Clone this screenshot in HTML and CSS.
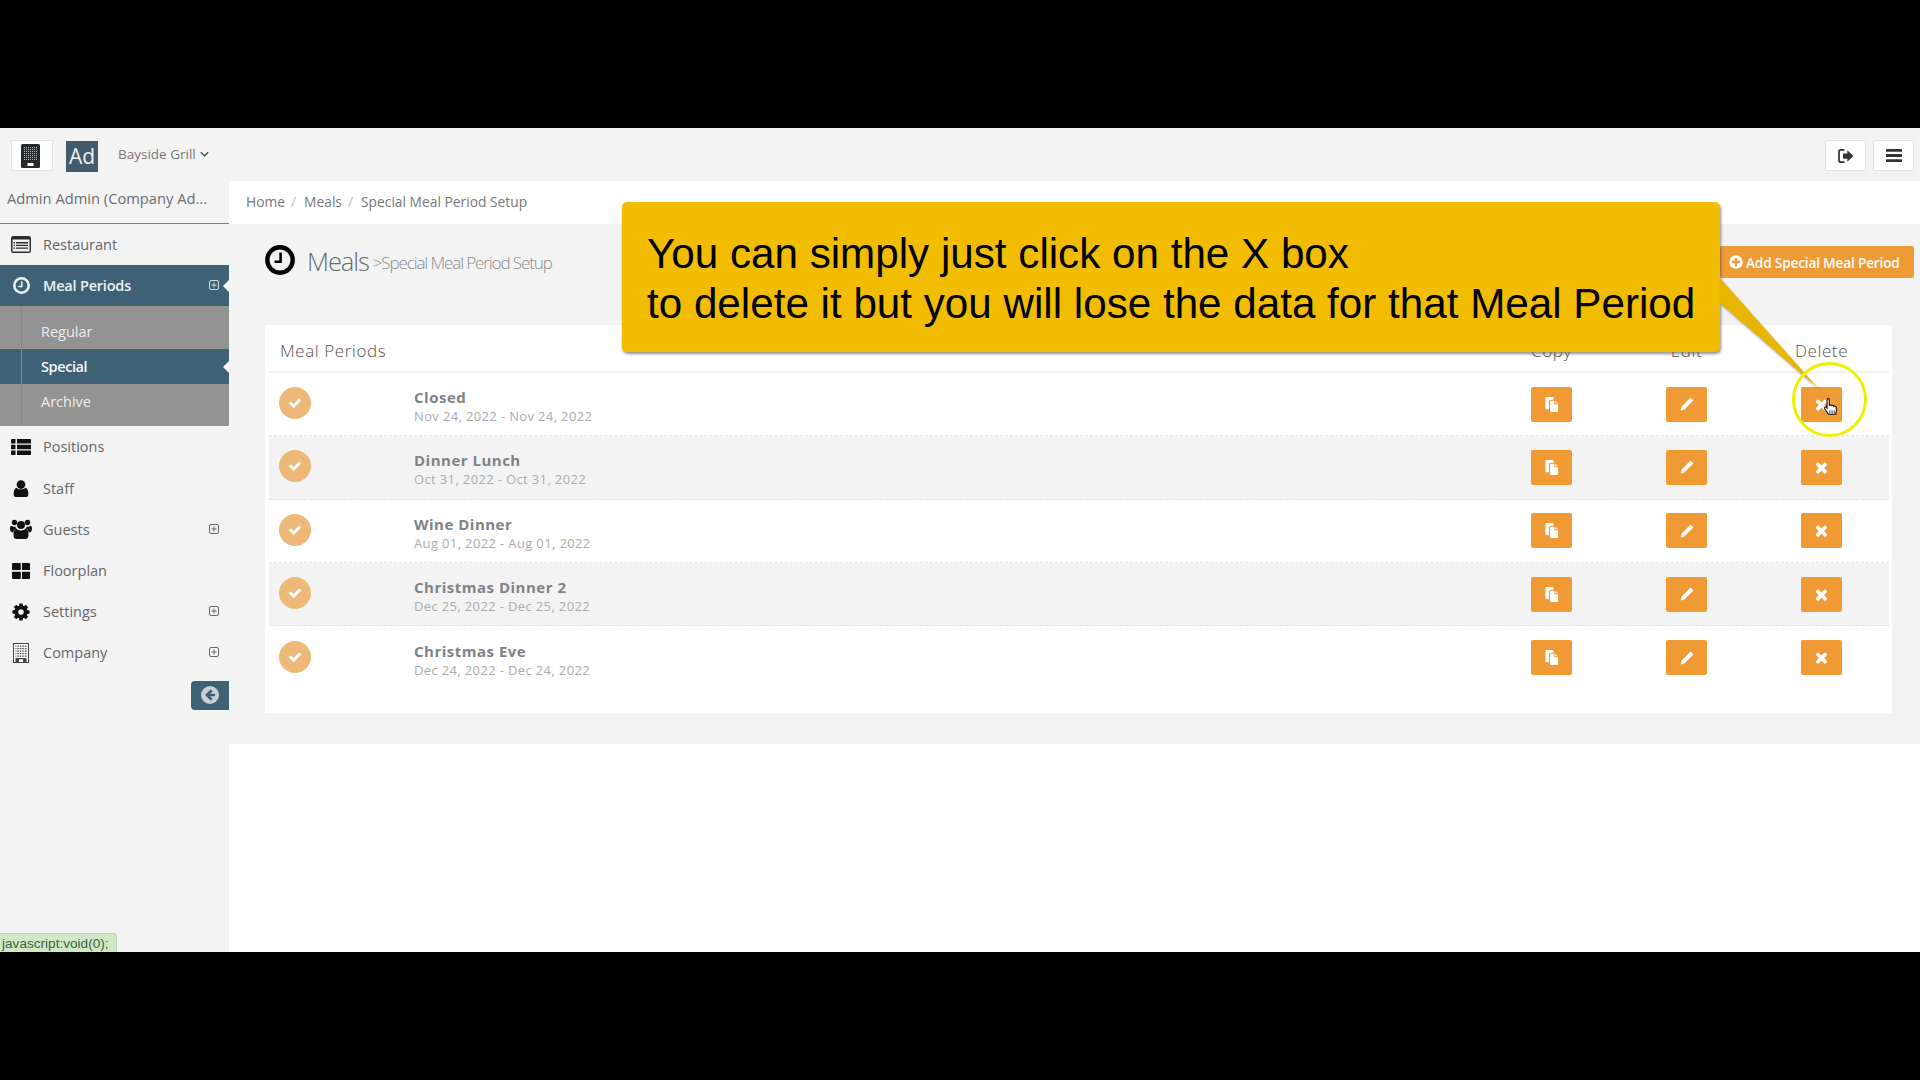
FILE: index.html
```html
<!DOCTYPE html>
<html lang="en">
<head>
<meta charset="utf-8">
<title>Special Meal Period Setup</title>
<link rel="stylesheet" href="styles.css">
</head>
<body>
<svg class="sprite" xmlns="http://www.w3.org/2000/svg">
  <symbol id="i-check" viewBox="0 0 1792 1792"><path d="M1671 566q0 40-28 68l-724 724-136 136q-28 28-68 28t-68-28l-136-136-362-362q-28-28-28-68t28-68l136-136q28-28 68-28t68 28l294 295 656-657q28-28 68-28t68 28l136 136q28 28 28 68z"/></symbol>
  <symbol id="i-times" viewBox="0 0 1792 1792"><path d="M1490 1322q0 40-28 68l-136 136q-28 28-68 28t-68-28l-294-294-294 294q-28 28-68 28t-68-28l-136-136q-28-28-28-68t28-68l294-294-294-294q-28-28-28-68t28-68l136-136q28-28 68-28t68 28l294 294 294-294q28-28 68-28t68 28l136 136q28 28 28 68t-28 68l-294 294 294 294q28 28 28 68z"/></symbol>
  <symbol id="i-cog" viewBox="0 0 1792 1792"><path d="M1152 896q0-106-75-181t-181-75-181 75-75 181 75 181 181 75 181-75 75-181zm512-109v222q0 12-8 23t-20 13l-185 28q-19 54-39 91 35 50 107 138 10 12 10 25t-9 23q-27 37-99 108t-94 71q-12 0-26-9l-138-108q-44 23-91 38-16 136-29 186-7 28-36 28h-222q-14 0-24.5-8.5t-11.5-21.5l-28-184q-49-16-90-37l-141 107q-10 9-25 9-14 0-25-11-126-114-165-168-7-10-7-23 0-12 8-23 15-21 51-66.5t54-70.5q-27-50-41-99l-183-27q-13-2-21-12.5t-8-23.5v-222q0-12 8-23t19-13l186-28q14-46 39-92-40-57-107-138-10-12-10-24 0-10 9-23 26-36 98.5-107.5t94.5-71.5q13 0 26 10l138 107q44-23 91-38 16-136 29-186 7-28 36-28h222q14 0 24.5 8.5t11.5 21.5l28 184q49 16 90 37l142-107q9-9 24-9 13 0 25 10 129 119 165 170 7 8 7 22 0 12-8 23-15 21-51 66.5t-54 70.5q26 50 41 98l183 28q13 2 21 12.5t8 23.5z"/></symbol>
  <symbol id="i-clock" viewBox="0 0 30 30"><circle cx="15" cy="15" r="12.7" fill="none" stroke="currentColor" stroke-width="4.4"/><path d="M15.6 7.5v9.2H9.5" fill="none" stroke="currentColor" stroke-width="2.6"/></symbol>
  <symbol id="i-card" viewBox="0 0 20 17"><rect x="0" y="0" width="20" height="17" rx="2.2"/><rect x="1.5" y="3.5" width="17" height="12" fill="#f3f3f4"/><path d="M5 6h12v1.4H5zM5 8.7h12v1.4H5zM5 11.4h12v1.4H5zM2.5 6h1.6v1.4H2.5zM2.5 8.7h1.6v1.4H2.5zM2.5 11.4h1.6v1.4H2.5z"/></symbol>
  <symbol id="i-list" viewBox="0 0 20 16"><path d="M0 1a1 1 0 0 1 1-1h3.5v4.4H0zM6 0h13a1 1 0 0 1 1 1v3.4H6zM0 5.8h4.5v4.4H0zM6 5.8h14v4.4H6zM0 11.6h4.5V16H1a1 1 0 0 1-1-1zM6 11.6h14V15a1 1 0 0 1-1 1H6z"/></symbol>
  <symbol id="i-user" viewBox="0 0 16 18"><circle cx="8" cy="4.8" r="4.6"/><path d="M3.4 8.2C5 10.4 11 10.4 12.6 8.2 15 9 15.8 11.5 15.8 15c0 2-1.2 3-3 3H3.2c-1.800 0-3-1-3-3 0-3.500.8-6 3.200-6.800z"/></symbol>
  <symbol id="i-users" viewBox="0 0 22 20"><circle cx="11" cy="6" r="4"/><circle cx="4.500" cy="3.500" r="2.700"/><circle cx="17.500" cy="3.500" r="2.700"/><path d="M6.300 9.600c1.800 2.500 7.600 2.500 9.400 0 2 .5 2.800 3 2.800 6.500 0 2.500-1.200 3.900-3 3.900H6.500c-1.800 0-3-1.400-3-3.900 0-3.500.8-6 2.800-6.500z"/><path d="M0 9.500C0 7.500.8 6.500 1.800 6.700c1 1.300 2.500 1.400 3.500.8.200 1 .5 1.600 1 2.100-1.500.6-2.700 2-3 3.900C1 13.500 0 12 0 9.500zM22 9.500c0-2-.8-3-1.800-2.800-1 1.300-2.500 1.400-3.500.8-.2 1-.5 1.600-1 2.100 1.500.6 2.700 2 3 3.900 2.300 0 3.300-1.500 3.300-4z"/></symbol>
  <symbol id="i-grid" viewBox="0 0 18 16"><path d="M1 0h6.800a1 1 0 0 1 1 .8V7H0V1a1 1 0 0 1 1-1zM10 0h7a1 1 0 0 1 1 1v6H10zM0 8.800h8.800V16H1a1 1 0 0 1-1-1zM10 8.800h8V15a1 1 0 0 1-1 1h-7z"/></symbol>
  <symbol id="i-building" viewBox="0 0 16 20"><rect x="0.500" y="0.500" width="15" height="19" fill="#fff" stroke="currentColor"/><path d="M2.500 2.500h11v1.200h-11zM2.500 5h11v1.200h-11zM2.500 7.500h11v1.200h-11zM2.500 10h11v1.200h-11zM2.500 12.500h11v1.200h-11z"/><path d="M3.800 2v12.500M6.300 2v12.500M8.800 2v12.500M11.300 2v12.500" stroke="#fff" stroke-width="1"/><path d="M2.500 15h3.500v4H2.500zM10 15h3.500v4H10zM6 15h4v1.300H6z"/></symbol>
  <symbol id="i-logo" viewBox="0 0 19 24"><rect width="19" height="24" rx="1.500"/><path d="M3 3.500h13M3 5.500h13M3 7.500h13M3 9.500h13M3 11.500h13M3 13.500h13M3 15.500h13" fill="none" stroke="#b5b7b9" stroke-dasharray="1 1"/><rect x="6.500" y="19" width="6" height="3" fill="#fff"/></symbol>
  <symbol id="i-plus-box" viewBox="0 0 10 10"><rect x=".5" y=".5" width="9" height="9" rx="1.500" fill="none" stroke="currentColor"/><path d="M5 2.500v5M2.500 5h5" stroke="currentColor" fill="none"/></symbol>
  <symbol id="i-back" viewBox="0 0 16 16"><circle cx="8" cy="8" r="8"/><path d="M8.700 2.900 3.600 8l5.100 5.100 1.700-1.700-2.200-2.200h4.300V6.800H8.200l2.200-2.200z" fill="#3f6176"/></symbol>
  <symbol id="i-plus-c" viewBox="0 0 14 14"><circle cx="7" cy="7" r="6.700"/><path d="M5.800 3h2.400v2.800H11v2.400H8.200V11H5.800V8.200H3V5.800h2.800z" fill="#f09a36"/></symbol>
  <symbol id="i-copy" viewBox="0 0 14 16"><path d="M0 1.200C0 .5.500 0 1.200 0h6.300c.7 0 1.200.5 1.200 1.200V3H5.600c-1 0-1.800.8-1.800 1.800V13H1.200C.5 13 0 12.500 0 11.800z"/><path d="M5 5.200c0-.7.500-1.200 1.200-1.200h3.300v3.600h4V14.800c0 .7-.5 1.200-1.200 1.200H6.200c-.7 0-1.200-.5-1.200-1.200z"/><path d="M10.600 4.200 13.400 6.700h-2.800z"/></symbol>
  <symbol id="i-pencil" viewBox="0 0 14 14"><path d="M10.600.6 13.400 3.400 4.300 12.500.6 13.400l.9-3.700z"/></symbol>
  <symbol id="i-signout" viewBox="0 0 18 16"><path d="M6.500 1H3.200C2 1 1 2 1 3.200v9.600C1 14 2 15 3.200 15h3.300" fill="none" stroke="currentColor" stroke-width="2" stroke-linecap="round"/><path d="M10.500 1.500 17.500 8l-7 6.500V11H5.500V5h5z"/></symbol>
  <symbol id="i-bars" viewBox="0 0 16 13"><rect width="16" height="2.800" rx=".6"/><rect y="5.100" width="16" height="2.800" rx=".6"/><rect y="10.200" width="16" height="2.800" rx=".6"/></symbol>
  <symbol id="i-chev" viewBox="0 0 10 6"><path d="M1 1l4 4 4-4" fill="none" stroke="currentColor" stroke-width="1.700"/></symbol>
  <symbol id="i-hand" viewBox="0 0 14 17"><path d="M3.500 1.500c0-1.300 2-1.300 2 0v5c.8-.6 1.700-.3 2 .3.800-.5 1.700-.2 2 .5.900-.4 2 .1 2.200 1 .4 2 .3 4-.5 6.200H4.800L1.200 9.500c-.6-1.100.7-2 1.600-1.200l.7.700z" fill="#fff" stroke="#111" stroke-width="1"/><path d="M6 11v3M8 11v3M10 11v3" stroke="#111" stroke-width=".7"/></symbol>
</svg>

<main class="app">
  <header class="topbar">
    <div class="topbar-left">
      <span class="logo-box"><svg class="ico-logo"><use href="#i-logo"/></svg></span>
      <span class="avatar">Ad</span>
      <span class="venue">Bayside Grill<svg class="ico-chev"><use href="#i-chev"/></svg></span>
    </div>
    <div class="topbar-right">
      <span class="tool-btn"><svg class="ico-signout"><use href="#i-signout"/></svg></span>
      <span class="tool-btn"><svg class="ico-bars"><use href="#i-bars"/></svg></span>
    </div>
  </header>

  <div class="body">
    <nav class="sidebar">
      <div class="user-name">Admin Admin (Company Ad...</div>
      <a class="menu-item"><span class="menu-ico"><svg class="ico-card"><use href="#i-card"/></svg></span>Restaurant</a>
      <a class="menu-item is-active"><span class="menu-ico"><svg class="ico-m"><use href="#i-clock"/></svg></span>Meal Periods<svg class="plus"><use href="#i-plus-box"/></svg></a>
      <div class="submenu">
        <a class="sub-item sub-regular">Regular</a>
        <a class="sub-item is-current">Special</a>
        <a class="sub-item sub-archive">Archive</a>
      </div>
      <a class="menu-item"><span class="menu-ico"><svg class="ico-list"><use href="#i-list"/></svg></span>Positions</a>
      <a class="menu-item"><span class="menu-ico"><svg class="ico-user"><use href="#i-user"/></svg></span>Staff</a>
      <a class="menu-item"><span class="menu-ico"><svg class="ico-users"><use href="#i-users"/></svg></span>Guests<svg class="plus"><use href="#i-plus-box"/></svg></a>
      <a class="menu-item"><span class="menu-ico"><svg class="ico-grid"><use href="#i-grid"/></svg></span>Floorplan</a>
      <a class="menu-item"><span class="menu-ico"><svg class="ico-cog"><use href="#i-cog"/></svg></span>Settings<svg class="plus"><use href="#i-plus-box"/></svg></a>
      <a class="menu-item"><span class="menu-ico"><svg class="ico-building"><use href="#i-building"/></svg></span>Company<svg class="plus"><use href="#i-plus-box"/></svg></a>
      <div class="collapse-row"><span class="collapse-btn"><svg class="ico-back"><use href="#i-back"/></svg></span></div>
    </nav>

    <section class="content">
      <div class="breadcrumb">
        <span>Home</span><i>/</i><span>Meals</span><i>/</i><span>Special Meal Period Setup</span>
      </div>
      <div class="panel">
        <div class="page-head">
          <h1 class="page-title"><svg class="ico-title"><use href="#i-clock"/></svg><span class="title-main">Meals</span><small>&gt;Special Meal Period Setup</small></h1>
          <span class="add-btn"><svg class="ico-plus"><use href="#i-plus-c"/></svg>Add Special Meal Period</span>
        </div>
        <div class="card">
          <div class="grid-row head-row">
            <span class="col-title">Meal Periods</span>
            <span class="col-head">Copy</span>
            <span class="col-head">Edit</span>
            <span class="col-head">Delete</span>
          </div>

          <div class="grid-row data-row">
            <div class="name-cell"><span class="status"><svg><use href="#i-check"/></svg></span><div class="meal"><b>Closed</b><span>Nov 24, 2022 - Nov 24, 2022</span></div></div>
            <span class="cell"><span class="act"><svg class="ico-copy"><use href="#i-copy"/></svg></span></span>
            <span class="cell"><span class="act"><svg class="ico-pencil"><use href="#i-pencil"/></svg></span></span>
            <span class="cell"><span class="act"><svg class="ico-times"><use href="#i-times"/></svg></span></span>
          </div>
          <div class="grid-row data-row alt">
            <div class="name-cell"><span class="status"><svg><use href="#i-check"/></svg></span><div class="meal"><b>Dinner Lunch</b><span>Oct 31, 2022 - Oct 31, 2022</span></div></div>
            <span class="cell"><span class="act"><svg class="ico-copy"><use href="#i-copy"/></svg></span></span>
            <span class="cell"><span class="act"><svg class="ico-pencil"><use href="#i-pencil"/></svg></span></span>
            <span class="cell"><span class="act"><svg class="ico-times"><use href="#i-times"/></svg></span></span>
          </div>
          <div class="grid-row data-row">
            <div class="name-cell"><span class="status"><svg><use href="#i-check"/></svg></span><div class="meal"><b>Wine Dinner</b><span>Aug 01, 2022 - Aug 01, 2022</span></div></div>
            <span class="cell"><span class="act"><svg class="ico-copy"><use href="#i-copy"/></svg></span></span>
            <span class="cell"><span class="act"><svg class="ico-pencil"><use href="#i-pencil"/></svg></span></span>
            <span class="cell"><span class="act"><svg class="ico-times"><use href="#i-times"/></svg></span></span>
          </div>
          <div class="grid-row data-row alt">
            <div class="name-cell"><span class="status"><svg><use href="#i-check"/></svg></span><div class="meal"><b>Christmas Dinner 2</b><span>Dec 25, 2022 - Dec 25, 2022</span></div></div>
            <span class="cell"><span class="act"><svg class="ico-copy"><use href="#i-copy"/></svg></span></span>
            <span class="cell"><span class="act"><svg class="ico-pencil"><use href="#i-pencil"/></svg></span></span>
            <span class="cell"><span class="act"><svg class="ico-times"><use href="#i-times"/></svg></span></span>
          </div>
          <div class="grid-row data-row">
            <div class="name-cell"><span class="status"><svg><use href="#i-check"/></svg></span><div class="meal"><b>Christmas Eve</b><span>Dec 24, 2022 - Dec 24, 2022</span></div></div>
            <span class="cell"><span class="act"><svg class="ico-copy"><use href="#i-copy"/></svg></span></span>
            <span class="cell"><span class="act"><svg class="ico-pencil"><use href="#i-pencil"/></svg></span></span>
            <span class="cell"><span class="act"><svg class="ico-times"><use href="#i-times"/></svg></span></span>
          </div>
        </div>
      </div>
    </section>
  </div>

  <div class="status-tip">javascript:void(0);</div>

  <div class="callout">
    <svg class="callout-tail" viewBox="0 0 110 120"><polygon points="0,0 98,110 0,25"/></svg>
    <p>You can simply just click on the X box<br>to delete it but you will lose the data for that Meal Period</p>
  </div>
  <span class="click-ring"></span>
  <svg class="ico-hand"><use href="#i-hand"/></svg>
</main>
</body>
</html>
```
FILE: styles.css
```css
* { box-sizing: border-box; }
html, body { margin: 0; padding: 0; }
body {
  background: #000;
  font-family: "Open Sans", "Liberation Sans", sans-serif;
  color: #676a6c;
  padding: 128px 0;
  overflow: hidden;
}
.sprite { display: none; }
svg { fill: currentColor; display: block; }

.app {
  position: relative;
  height: 824px;
  background: #fff;
  display: flex;
  flex-direction: column;
}

/* top bar */
.topbar {
  height: 53px;
  background: #f3f3f4;
  display: flex;
  justify-content: space-between;
  padding: 12px 6px 0 11px;
}
.topbar-left { display: flex; align-items: flex-start; }
.topbar-right { display: flex; gap: 7px; }
.logo-box {
  width: 42px;
  height: 31px;
  background: #fff;
  border: 1px solid #e2e2e2;
  border-radius: 2px;
  display: flex;
  align-items: center;
  justify-content: center;
}
.ico-logo { width: 19px; height: 24px; margin-right: 3px; color: #26292c; }
.avatar {
  width: 32px;
  height: 31px;
  margin: 1px 0 0 13px;
  background: #435b6c;
  color: #eef1f3;
  font-size: 21px;
  line-height: 31px;
  text-align: center;
}
.venue {
  margin-left: 20px;
  font-size: 13.5px;
  line-height: 28px;
  color: #777;
  display: flex;
  align-items: center;
  gap: 4px;
  white-space: pre;
}
.ico-chev { width: 9px; height: 6px; color: #555; }
.tool-btn {
  width: 41px;
  height: 31px;
  background: #fff;
  border: 1px solid #e2e2e2;
  border-radius: 2px;
  display: flex;
  align-items: center;
  justify-content: center;
  color: #333;
}
.ico-signout { width: 16px; height: 14px; }
.ico-bars { width: 16px; height: 13px; }

/* body */
.body { flex: 1; display: flex; min-height: 0; }

.sidebar {
  width: 229px;
  flex: none;
  background: #f3f3f4;
  display: flex;
  flex-direction: column;
}
.user-name {
  height: 43px;
  padding: 0 0 6px 7px;
  border-bottom: 1px solid #7d7f81;
  font-size: 14.7px;
  line-height: 34px;
  color: #6b6d6f;
  white-space: nowrap;
}
.menu-item {
  position: relative;
  height: 41.2px;
  display: flex;
  align-items: center;
  font-size: 14.5px;
  color: #666;
}
.menu-ico {
  width: 42px;
  margin-right: 1px;
  flex: none;
  display: flex;
  justify-content: center;
  color: #111;
}
.ico-card { width: 20px; height: 17px; color: #2d2d2d; }
.ico-m { width: 17px; height: 17px; }
.ico-list { width: 20px; height: 16px; }
.ico-user { width: 16px; height: 17px; }
.ico-users { width: 22px; height: 20px; }
.ico-grid { width: 18px; height: 16px; }
.ico-cog { width: 20px; height: 20px; }
.ico-building { width: 16px; height: 20px; color: #444; }
.plus { position: absolute; left: 209px; top: 15px; width: 10px; height: 10px; color: #666; }

.is-active { background: #3f6176; color: #eef2f4; font-weight: 600; letter-spacing: -.2px; }
.is-active .menu-ico { color: #eef2f4; }
.is-active .plus { color: #d5dee3; }
.is-active::after, .is-current::after {
  content: "";
  position: absolute;
  right: 0;
  top: 50%;
  margin-top: -6px;
  border: 6px solid transparent;
  border-left-width: 0;
  border-right-color: #fff;
}

.submenu { background: #939393; padding: 0; }
.sub-item {
  position: relative;
  display: flex;
  align-items: center;
  height: 35px;
  padding-left: 41px;
  font-size: 14.5px;
  color: #eeeeee;
}
.sub-regular { height: 43px; padding-top: 7px; }
.sub-archive { height: 42px; padding-bottom: 8px; }
.sub-item::before {
  content: "";
  position: absolute;
  left: 21px;
  top: 0;
  bottom: 0;
  border-left: 1px solid #7f8a90;
}
.is-current { background: #3f6176; color: #f6f8f9; font-weight: 600; letter-spacing: -.4px; }
.collapse-row { display: flex; justify-content: flex-end; margin-top: 7px; }
.collapse-btn {
  width: 38px;
  height: 29px;
  background: #3f6176;
  border-radius: 4px 0 0 4px;
  display: flex;
  align-items: center;
  justify-content: center;
  color: #c9cfd3;
}
.ico-back { width: 18px; height: 18px; }

/* content */
.content { flex: 1; min-width: 0; display: flex; flex-direction: column; }
.breadcrumb {
  height: 43px;
  padding: 0 0 2px 17px;
  background: #fff;
  display: flex;
  align-items: center;
  font-size: 13.8px;
  color: #777;
}
.breadcrumb i { font-style: normal; color: #bbb; margin: 0 8px 0 6px; }
.panel {
  background: #f3f3f4;
  padding: 0 0 31px 36px;
}
.page-head {
  height: 101px;
  padding: 22px 6px 0 0;
  display: flex;
  justify-content: space-between;
  align-items: flex-start;
}
.page-title {
  margin: 0;
  display: flex;
  align-items: center;
  font-weight: 300;
  color: #676a6c;
  height: 30px;
  margin-top: -1px;
}
.ico-title { width: 30px; height: 30px; color: #000; }
.title-main { margin-left: 12px; font-size: 25.5px; letter-spacing: -1.1px; margin-top: 1px; }
.page-title small { margin-left: 4px; margin-top: 5px; font-size: 17px; font-weight: 300; letter-spacing: -1.1px; color: #8a8c8e; }
.add-btn {
  height: 32px;
  width: 194px;
  padding-left: 9px;
  background: #f09a36;
  border-radius: 2px;
  color: #fff;
  font-size: 13.7px;
  font-weight: 600;
  letter-spacing: -.2px;
  display: flex;
  align-items: center;
  gap: 3px;
  white-space: nowrap;
}
.ico-plus { width: 14px; height: 14px; flex: none; }

.card {
  width: 1627px;
  height: 388px;
  background: #fff;
  padding: 0 3px 0 4px;
}
.grid-row {
  display: grid;
  grid-template-columns: 1fr 135px 135px 135px;
  align-items: center;
}
.head-row {
  height: 48px;
  padding-top: 4px;
  border-bottom: 2px solid #f1f1f2;
  font-size: 17px;
  font-weight: 300;
  letter-spacing: .6px;
  color: #555;
}
.col-title { padding-left: 11px; }
.col-head { text-align: center; }
.data-row { height: 63.3px; border-bottom: 1px dashed #e4e4e4; }
.data-row:last-child { border-bottom: 0; }
.alt { background: #f3f3f4; }
.name-cell { display: flex; align-items: flex-start; }
.status {
  width: 32px;
  height: 32px;
  margin: 4px 103px 0 10px;
  border-radius: 50%;
  background: #eeb978;
  color: #fff;
  display: flex;
  align-items: center;
  justify-content: center;
}
.status svg { width: 14px; height: 14px; }
.meal { display: flex; flex-direction: column; margin-top: 5px; }
.meal b { font-size: 15px; line-height: 19px; font-weight: 700; letter-spacing: .5px; color: #808286; }
.meal span { font-size: 13px; line-height: 18px; color: #ababab; letter-spacing: .36px; }
.cell { display: flex; justify-content: center; }
.act {
  width: 41px;
  height: 35px;
  background: #f09a36;
  border-radius: 2px;
  color: #fff;
  display: flex;
  align-items: center;
  justify-content: center;
}
.ico-copy { width: 14px; height: 15px; }
.ico-pencil { width: 14px; height: 14px; }
.ico-times { width: 17px; height: 17px; }

/* overlays */
.status-tip {
  position: absolute;
  left: 0;
  bottom: 0;
  width: 117px;
  height: 19px;
  padding-left: 2px;
  background: #cfe9c6;
  border: 1px solid #bcd8b2;
  border-width: 1px 1px 0 0;
  border-radius: 0 4px 0 0;
  font-family: "Liberation Sans", sans-serif;
  font-size: 13.6px;
  line-height: 20px;
  color: #4b5a48;
  white-space: nowrap;
}
.callout {
  position: absolute;
  left: 622px;
  top: 74px;
  width: 1098px;
  height: 150px;
  background: #f2bd00;
  border-radius: 5px;
  padding: 27px 0 0 25px;
  color: #000;
  font-family: "Liberation Sans", sans-serif;
  font-size: 42.2px;
  line-height: 50px;
  white-space: nowrap;
  box-shadow: 1px 2px 3px rgba(70, 70, 70, .6);
}
.callout p { margin: 0; }
.callout-tail {
  position: absolute;
  left: 1098px;
  top: 76px;
  width: 110px;
  height: 120px;
  fill: #e8b600;
  filter: drop-shadow(1px 2px 1px rgba(90, 90, 90, .5));
}
.click-ring {
  position: absolute;
  left: 1792px;
  top: 234px;
  width: 75px;
  height: 75px;
  border: 3.500px solid #eef000;
  border-radius: 50%;
}
.ico-hand { position: absolute; left: 1823px; top: 270px; width: 16px; height: 19px; }
```
